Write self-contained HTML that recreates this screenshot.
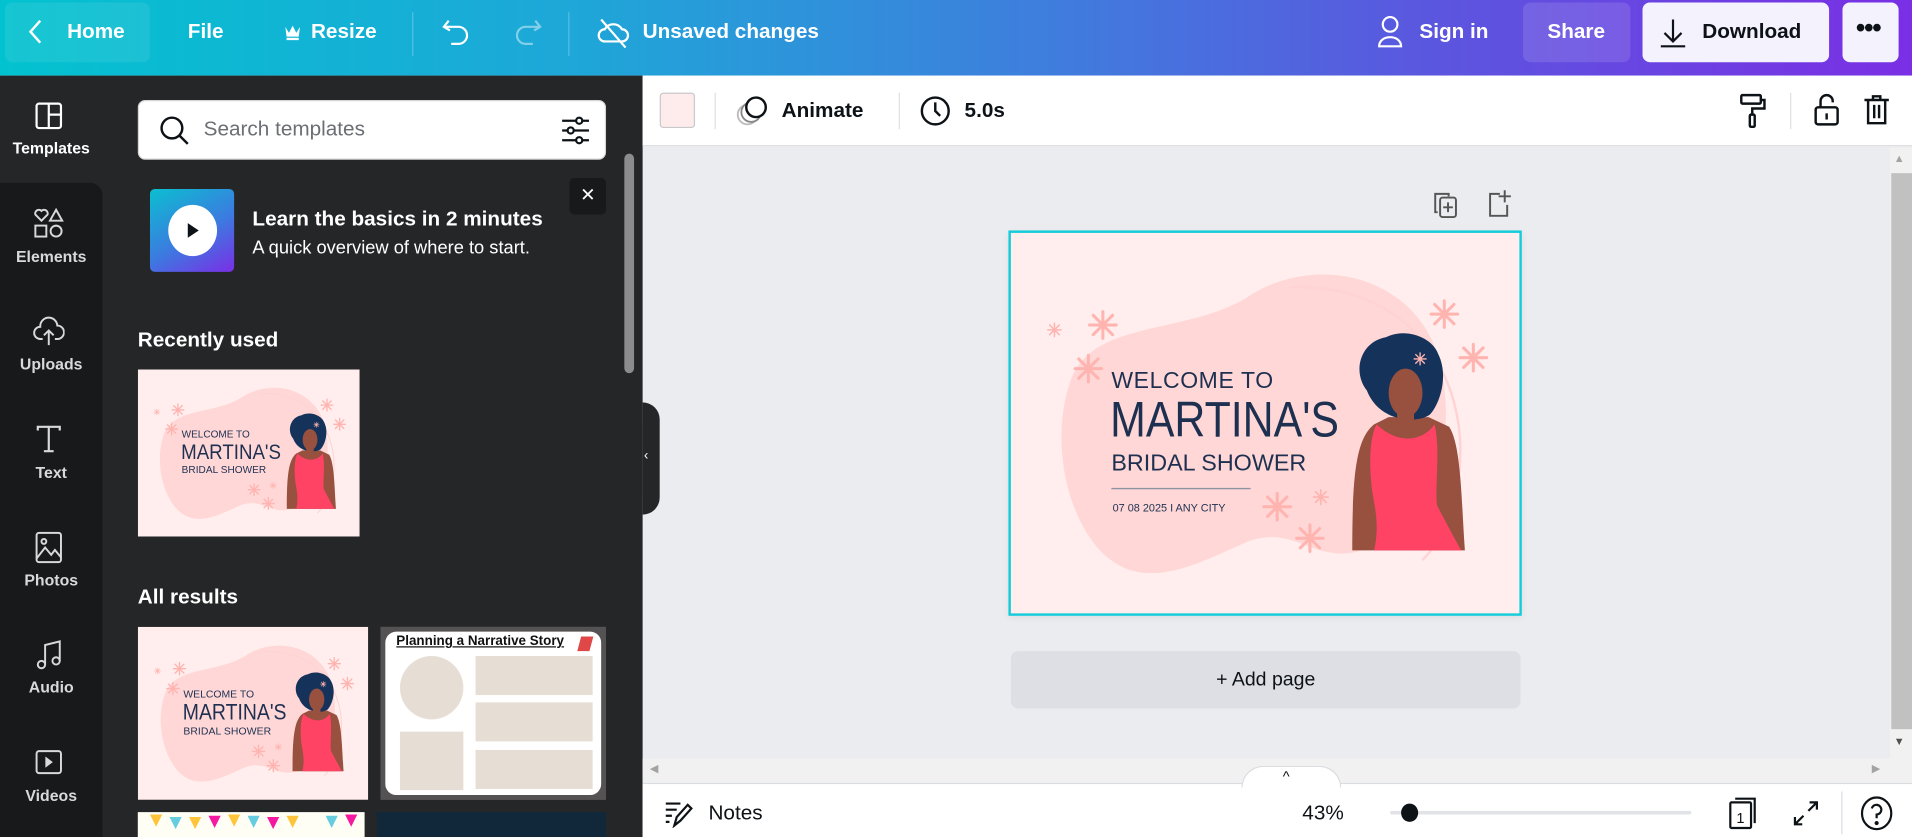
<!DOCTYPE html>
<html><head><meta charset="utf-8">
<style>
*{box-sizing:border-box;margin:0;padding:0}
html,body{width:1912px;height:837px;overflow:hidden;background:#ebecf0}
#w{position:absolute;left:0;top:0;width:1568px;height:686.5px;transform:scale(1.21939);transform-origin:0 0;font-family:"Liberation Sans",sans-serif;overflow:hidden;background:#ebecf0}
.a{position:absolute}
.tb{color:#fff;font-weight:bold;font-size:17px;top:16px}
.rail{color:#d9d9db;font-size:13px;font-weight:bold;width:84px;text-align:center;left:0}
.h{color:#fff;font-weight:bold;font-size:17px}
</style></head><body><div id="w">
<div class="a" style="left:0;top:0;width:1568px;height:62px;background:linear-gradient(90deg,#03c2cf 0%,#1ea7d8 30%,#3f7ddd 55%,#5b56df 75%,#7a2fe4 100%)"></div>
<div class="a" style="left:4px;top:2px;width:119px;height:49px;background:rgba(255,255,255,.08);border-radius:6px"></div>
<svg class="a" style="left:20px;top:14px" width="20" height="24" viewBox="0 0 20 24"><path d="M13 3 L5 12 L13 21" stroke="#fff" stroke-width="2" fill="none"/></svg>
<div class="a tb" style="left:55px">Home</div>
<div class="a tb" style="left:154px">File</div>
<svg class="a" style="left:233px;top:19px" width="14" height="14" viewBox="0 0 14 14"><path d="M1 3 L4 8 L7 2 L10 8 L13 3 L12 11 L2 11Z" fill="#fff"/><rect x="2" y="12" width="10" height="2" fill="#fff"/></svg>
<div class="a tb" style="left:255px">Resize</div>
<div class="a" style="left:338px;top:10px;width:1px;height:36px;background:rgba(255,255,255,.25)"></div>
<svg class="a" style="left:362px;top:13px" width="26" height="26" viewBox="0 0 26 26"><path d="M6 4 L2 9 L7 12" stroke="#fff" stroke-width="1.8" fill="none"/><path d="M3 9 H14 A7 7 0 0 1 14 23 H8" stroke="#fff" stroke-width="1.8" fill="none"/></svg>
<svg class="a" style="left:419px;top:13px" width="26" height="26" viewBox="0 0 26 26" opacity=".45"><path d="M20 4 L24 9 L19 12" stroke="#fff" stroke-width="1.8" fill="none"/><path d="M23 9 H12 A7 7 0 0 0 12 23 H18" stroke="#fff" stroke-width="1.8" fill="none"/></svg>
<div class="a" style="left:466px;top:10px;width:1px;height:36px;background:rgba(255,255,255,.25)"></div>
<svg class="a" style="left:488px;top:12px" width="30" height="30" viewBox="0 0 30 30"><path d="M8 22 H22 A5 5 0 0 0 22 12 A8 8 0 0 0 8 12 A5 5 0 0 0 8 22Z" stroke="#fff" stroke-width="1.8" fill="none"/><path d="M5 4 L25 27" stroke="#fff" stroke-width="1.8"/></svg>
<div class="a tb" style="left:527px">Unsaved changes</div>
<svg class="a" style="left:1128px;top:12px" width="24" height="28" viewBox="0 0 24 28"><circle cx="12" cy="8" r="6" stroke="#fff" stroke-width="1.8" fill="none"/><path d="M3 26 C3 16 21 16 21 26Z" stroke="#fff" stroke-width="1.8" fill="none"/></svg>
<div class="a tb" style="left:1164px">Sign in</div>
<div class="a" style="left:1249px;top:2px;width:88px;height:49px;background:rgba(255,255,255,.12);border-radius:6px"></div>
<div class="a tb" style="left:1269px">Share</div>
<div class="a" style="left:1347px;top:2px;width:153px;height:49px;background:#f4f2fd;border-radius:6px"></div>
<svg class="a" style="left:1360px;top:14px" width="24" height="26" viewBox="0 0 24 26"><path d="M12 2 V20 M5 13 L12 20 L19 13 M2 24 H22" stroke="#0d1216" stroke-width="1.8" fill="none"/></svg>
<div class="a" style="left:1396px;top:16px;font-size:17px;font-weight:bold;color:#0d1216">Download</div>
<div class="a" style="left:1511px;top:2px;width:46px;height:49px;background:#f4f2fd;border-radius:6px"></div>
<div class="a" style="left:1522px;top:10px;font-size:22px;font-weight:bold;color:#0d1216;letter-spacing:-1px">•••</div>

<div class="a" style="left:0;top:62px;width:527px;height:625px;background:#252627"></div>
<div class="a" style="left:0;top:150px;width:84px;height:537px;background:#18191b;border-top-right-radius:10px"></div>
<svg class="a" style="left:28px;top:83px" width="24" height="24" viewBox="0 0 24 24"><rect x="2" y="2" width="20" height="20" rx="2" stroke="#fff" stroke-width="1.8" fill="none"/><path d="M12 2 V22 M12 11 H22" stroke="#fff" stroke-width="1.8"/></svg>
<div class="a rail" style="top:114px;color:#fff">Templates</div>
<svg class="a" style="left:27px;top:170px" width="26" height="26" viewBox="0 0 26 26" stroke="#d9d9db" stroke-width="1.6" fill="none"><path d="M7 11 L2 6 A3 3 0 0 1 7 3 A3 3 0 0 1 12 6Z"/><path d="M19 2 L24 11 H14Z"/><rect x="2" y="15" width="9" height="9"/><circle cx="19" cy="19.5" r="4.5"/></svg>
<div class="a rail" style="top:203px">Elements</div>
<svg class="a" style="left:27px;top:258px" width="26" height="26" viewBox="0 0 26 26" stroke="#d9d9db" stroke-width="1.6" fill="none"><path d="M8 20 H6 A5 5 0 0 1 6 10 A7 7 0 0 1 20 9 A5 5 0 0 1 20 20 H18"/><path d="M13 25 V13 M9 17 L13 13 L17 17"/></svg>
<div class="a rail" style="top:291px">Uploads</div>
<svg class="a" style="left:28px;top:348px" width="24" height="24" viewBox="0 0 24 24" stroke="#d9d9db" stroke-width="1.8" fill="none"><path d="M3 5 V2 H21 V5 M12 2 V22 M8 22 H16"/></svg>
<div class="a rail" style="top:380px">Text</div>
<svg class="a" style="left:28px;top:436px" width="24" height="26" viewBox="0 0 24 26" stroke="#d9d9db" stroke-width="1.6" fill="none"><rect x="2" y="1" width="20" height="24" rx="2"/><circle cx="8" cy="8" r="2"/><path d="M2 22 L9 13 L14 19 L17 15 L22 21"/></svg>
<div class="a rail" style="top:468px">Photos</div>
<svg class="a" style="left:28px;top:524px" width="24" height="26" viewBox="0 0 24 26" stroke="#d9d9db" stroke-width="1.6" fill="none"><circle cx="6" cy="21" r="3"/><circle cx="18" cy="18" r="3"/><path d="M9 21 V5 L21 2 V18"/></svg>
<div class="a rail" style="top:556px">Audio</div>
<svg class="a" style="left:28px;top:613px" width="24" height="24" viewBox="0 0 24 24" stroke="#d9d9db" stroke-width="1.6" fill="none"><rect x="2" y="3" width="20" height="18" rx="2"/><path d="M10 9 L14 12 L10 15Z" fill="#d9d9db"/></svg>
<div class="a rail" style="top:645px">Videos</div>

<div class="a" style="left:113px;top:82px;width:384px;height:49px;background:#fff;border-radius:6px;border:1px solid #d6d6d6"></div>
<svg class="a" style="left:129px;top:93px" width="28" height="28" viewBox="0 0 28 28"><circle cx="12" cy="12" r="8.5" stroke="#0d1216" stroke-width="2" fill="none"/><path d="M18 18 L25 25" stroke="#0d1216" stroke-width="2"/></svg>
<div class="a" style="left:167px;top:96px;font-size:17px;color:#6b6e73">Search templates</div>
<svg class="a" style="left:459px;top:94px" width="26" height="26" viewBox="0 0 26 26" stroke="#0d1216" stroke-width="1.8" fill="none"><path d="M2 5 H24 M2 13 H24 M2 21 H24"/><circle cx="16" cy="5" r="2.5" fill="#fff"/><circle cx="9" cy="13" r="2.5" fill="#fff"/><circle cx="16" cy="21" r="2.5" fill="#fff"/></svg>
<div class="a" style="left:123px;top:155px;width:69px;height:68px;border-radius:4px;background:linear-gradient(150deg,#0bbfd0,#3b7be0 55%,#7a2ee6)"></div>
<div class="a" style="left:138px;top:168px;width:40px;height:42px;border-radius:50%;background:#fff"></div>
<svg class="a" style="left:151px;top:182px" width="14" height="14" viewBox="0 0 14 14"><path d="M3 1 L12 7 L3 13Z" fill="#0d1216"/></svg>
<div class="a h" style="left:207px;top:170px">Learn the basics in 2 minutes</div>
<div class="a" style="left:207px;top:195px;color:#fff;font-size:15px">A quick overview of where to start.</div>
<div class="a" style="left:467px;top:146px;width:30px;height:30px;background:#18191b;border-radius:4px;color:#fff;text-align:center;font-size:15px;line-height:30px">✕</div>
<div class="a" style="left:512px;top:126px;width:8px;height:180px;background:#8c8c8e;border-radius:4px"></div>
<div class="a h" style="left:113px;top:269px">Recently used</div>
<div class="a h" style="left:113px;top:480px">All results</div>

<svg width="0" height="0" style="position:absolute"><defs>
<g id="fl"><g stroke="#ffb4b0" stroke-width="2.5" stroke-linecap="round"><path d="M0 -11 V11 M-11 0 H11 M-8 -8 L8 8 M-8 8 L8 -8"/></g></g>
<symbol id="art" viewBox="0 0 420 314">
<rect width="420" height="314" fill="#ffeeed"/>
<path d="M50 120 C70 70 150 85 200 50 C260 15 340 40 355 110 C370 180 345 245 290 262 C250 274 235 240 195 255 C150 275 105 300 70 258 C40 220 35 160 50 120Z" fill="#ffd7d7"/>
<path d="M230 45 C330 40 380 120 370 200 C365 240 350 260 340 270" stroke="#ffd3d3" stroke-width="2" fill="none"/>
<use href="#fl" x="76" y="76"/><use href="#fl" x="64" y="112"/><use href="#fl" x="358" y="67"/><use href="#fl" x="382" y="103"/><use href="#fl" x="220" y="226"/><use href="#fl" x="247" y="252"/>
<g transform="translate(36 80) scale(.5)"><use href="#fl"/></g><g transform="translate(256 218) scale(.55)"><use href="#fl"/></g>
<path d="M282 262 C282 200 285 170 300 158 L312 152 L345 152 L362 160 C372 175 372 220 375 262Z" fill="#98503f"/>
<path d="M302 158 C320 175 340 172 350 158 C355 180 350 210 352 225 C360 240 368 255 372 262 L300 262 C305 240 300 225 298 210 C296 190 296 170 302 158Z" fill="#fe4365"/>
<path d="M294 130 C282 115 288 90 310 86 C326 78 348 86 353 100 C362 118 354 142 346 150 C335 158 304 156 294 130Z" fill="#15335a"/>
<ellipse cx="326" cy="132" rx="14" ry="20" fill="#98503f"/>
<rect x="319" y="145" width="14" height="14" fill="#98503f"/>
<g transform="translate(338 104) scale(.45)"><use href="#fl"/></g>
</symbol></defs></svg>

<svg class="a" style="left:113px;top:303px" width="182" height="137" viewBox="0 0 420 314" preserveAspectRatio="none"><use href="#art"/><g fill="#1e3050" font-family="Liberation Sans"><text x="83" y="128" font-size="19">WELCOME TO</text><text x="82" y="168" font-size="40" textLength="189" lengthAdjust="spacingAndGlyphs">MARTINA'S</text><text x="83" y="195" font-size="19" textLength="160">BRIDAL SHOWER</text></g></svg>
<svg class="a" style="left:113px;top:514px" width="189" height="142" viewBox="0 0 420 314" preserveAspectRatio="none"><use href="#art"/><g fill="#1e3050" font-family="Liberation Sans"><text x="83" y="128" font-size="19">WELCOME TO</text><text x="82" y="168" font-size="40" textLength="189" lengthAdjust="spacingAndGlyphs">MARTINA'S</text><text x="83" y="195" font-size="19" textLength="160">BRIDAL SHOWER</text></g></svg>
<div class="a" style="left:312px;top:514px;width:185px;height:142px;background:#555254;padding:4px 4px">
 <div style="position:relative;width:100%;height:100%;background:#fff;border-radius:9px;overflow:hidden">
  <div class="a" style="left:9px;top:2px;font-size:11px;font-weight:bold;text-decoration:underline;color:#111">Planning a Narrative Story</div>
  <div class="a" style="left:159px;top:4px;width:10px;height:12px;background:#e04848;transform:skewX(-15deg)"></div>
  <div class="a" style="left:12px;top:20px;width:52px;height:52px;border-radius:50%;background:#e6ddd5"></div>
  <div class="a" style="left:12px;top:82px;width:52px;height:48px;background:#e6ddd5"></div>
  <div class="a" style="left:74px;top:20px;width:96px;height:32px;background:#e6ddd5"></div>
  <div class="a" style="left:74px;top:58px;width:96px;height:32px;background:#e6ddd5"></div>
  <div class="a" style="left:74px;top:97px;width:96px;height:32px;background:#e6ddd5"></div>
 </div></div>
<div class="a" style="left:113px;top:666px;width:186px;height:22px;background:#fffef5"></div>
<svg class="a" style="left:113px;top:666px" width="186" height="20" viewBox="0 0 186 20"><path d="M10 2 L20 2 L15 12Z M42 4 L52 4 L47 14Z M74 2 L84 2 L79 12Z M122 3 L132 3 L127 13Z" fill="#ffc53a"/><path d="M26 4 L36 4 L31 14Z M90 3 L100 3 L95 13Z M154 3 L164 3 L159 13Z" fill="#66cde0"/><path d="M58 3 L68 3 L63 13Z M106 4 L116 4 L111 14Z M170 2 L180 2 L175 12Z" fill="#f419a0"/></svg>
<div class="a" style="left:309px;top:666px;width:188px;height:22px;background:#10283a"></div>

<div class="a" style="left:527px;top:62px;width:1041px;height:58px;background:#fff;border-bottom:1px solid #dcdde1"></div>
<div class="a" style="left:527px;top:330px;width:14px;height:92px;background:#252627;border-radius:0 14px 14px 0"></div>
<div class="a" style="left:528px;top:368px;color:#fff;font-size:11px">‹</div>

<div class="a" style="left:541px;top:76px;width:29px;height:29px;background:#fdeceb;border:1px solid #c9c9cc;border-radius:3px"></div>
<div class="a" style="left:586px;top:76px;width:1px;height:30px;background:#e0e0e3"></div>
<svg class="a" style="left:603px;top:77px" width="28" height="28" viewBox="0 0 28 28" fill="none"><circle cx="10" cy="17" r="8" stroke="#bbb" stroke-width="1.5"/><circle cx="13" cy="15" r="8" stroke="#888" stroke-width="1.5" fill="#fff"/><circle cx="17" cy="11" r="8" stroke="#0d1216" stroke-width="2" fill="#fff"/></svg>
<div class="a" style="left:641px;top:81px;font-size:17px;font-weight:bold;color:#0d1216">Animate</div>
<div class="a" style="left:737px;top:76px;width:1px;height:30px;background:#e0e0e3"></div>
<svg class="a" style="left:754px;top:78px" width="26" height="26" viewBox="0 0 26 26" fill="none" stroke="#0d1216" stroke-width="2"><circle cx="13" cy="13" r="11"/><path d="M13 6 V13 L17 17"/></svg>
<div class="a" style="left:791px;top:81px;font-size:17px;font-weight:bold;color:#0d1216">5.0s</div>
<svg class="a" style="left:1425px;top:76px" width="26" height="30" viewBox="0 0 26 30" fill="none" stroke="#0d1216" stroke-width="2"><rect x="3" y="2" width="16" height="7" rx="1"/><path d="M19 6 H22 V13 H12 V18"/><rect x="10" y="18" width="4" height="10" rx="1"/></svg>
<div class="a" style="left:1468px;top:76px;width:1px;height:30px;background:#e0e0e3"></div>
<svg class="a" style="left:1486px;top:75px" width="24" height="30" viewBox="0 0 24 30" fill="none" stroke="#0d1216" stroke-width="2"><path d="M7 13 V8 A5 5 0 0 1 17 8 V9"/><rect x="3" y="13" width="18" height="14" rx="2"/><path d="M12 18 V23"/></svg>
<svg class="a" style="left:1527px;top:76px" width="24" height="28" viewBox="0 0 24 28" fill="none" stroke="#0d1216" stroke-width="2"><path d="M2 6 H22 M9 6 V3 H15 V6 M5 6 V25 H19 V6 M10 10 V21 M14 10 V21"/></svg>

<div class="a" style="left:1550px;top:121px;width:18px;height:501px;background:#f1f1f1"></div>
<div class="a" style="left:1551px;top:142px;width:17px;height:456px;background:#c1c1c1"></div>
<div class="a" style="left:1553px;top:125px;font-size:9px;color:#a3a3a3">▲</div>
<div class="a" style="left:1553px;top:603px;font-size:9px;color:#505050">▼</div>
<div class="a" style="left:527px;top:622px;width:1041px;height:20px;background:#f1f1f1"></div>
<div class="a" style="left:533px;top:625px;font-size:9px;color:#a3a3a3">◀</div>
<div class="a" style="left:1535px;top:625px;font-size:9px;color:#a3a3a3">▶</div>

<svg class="a" style="left:1175px;top:156px" width="22" height="24" viewBox="0 0 22 24" fill="none" stroke="#555" stroke-width="1.6"><path d="M4 18 H2 V3 H13 V5"/><rect x="6" y="6" width="13" height="16" rx="2"/><path d="M12.5 10 V18 M8.5 14 H16.5"/></svg>
<svg class="a" style="left:1219px;top:155px" width="22" height="24" viewBox="0 0 22 24" fill="none" stroke="#555" stroke-width="1.6"><path d="M11 4 H3 V22 H17 V13 M15 1 V11 M10 6 H20"/></svg>

<div class="a" style="left:827px;top:189px;width:421px;height:316px;border:2px solid #12ccd9;box-shadow:0 2px 6px rgba(0,0,0,.06)"></div>
<svg class="a" style="left:829px;top:191px" width="417" height="312" viewBox="0 0 420 314" preserveAspectRatio="none"><use href="#art"/><g fill="#1e3050" font-family="Liberation Sans"><text x="83" y="128" font-size="19" letter-spacing=".5">WELCOME TO</text><text x="82" y="168" font-size="41" textLength="189" lengthAdjust="spacingAndGlyphs">MARTINA'S</text><text x="83" y="196" font-size="19" textLength="161" lengthAdjust="spacingAndGlyphs">BRIDAL SHOWER</text><text x="84" y="230" font-size="9">07 08  2025  I  ANY CITY</text></g><path d="M83 211 H198" stroke="#8e93a3" stroke-width="1.2"/></svg>

<div class="a" style="left:829px;top:534px;width:418px;height:47px;background:#dedfe4;border-radius:6px;text-align:center;line-height:47px;font-size:16px;color:#0d1216">+ Add page</div>

<div class="a" style="left:527px;top:642px;width:1041px;height:45px;background:#fff;border-top:1px solid #dcdde1"></div>
<div class="a" style="left:1018px;top:628px;width:82px;height:18px;background:#fff;border-radius:18px 18px 0 0;border:1px solid #dcdde1;border-bottom:none"></div>
<div class="a" style="left:1052px;top:630px;font-size:12px;color:#0d1216">^</div>
<svg class="a" style="left:545px;top:655px" width="24" height="24" viewBox="0 0 24 24" fill="none" stroke="#0d1216" stroke-width="1.8"><path d="M1 4 H13 M1 9 H10 M1 14 H6 M1 19 H4 M8 22 L10 15 L19 5 L22 8 L13 18Z"/></svg>
<div class="a" style="left:581px;top:657px;font-size:17px;color:#0d1216">Notes</div>
<div class="a" style="left:1068px;top:657px;font-size:17px;color:#0d1216">43%</div>
<div class="a" style="left:1140px;top:665px;width:247px;height:3px;background:#e2e3e7;border-radius:2px"></div>
<div class="a" style="left:1149px;top:659px;width:14px;height:15px;border-radius:50%;background:#0d1216"></div>
<svg class="a" style="left:1417px;top:653px" width="26" height="28" viewBox="0 0 26 28" fill="none" stroke="#0d1216" stroke-width="1.8"><rect x="2" y="5" width="17" height="21" rx="1"/><path d="M6 2 H22 V22"/><text x="7" y="22" font-size="12" fill="#0d1216" stroke="none" font-family="Liberation Sans">1</text></svg>
<svg class="a" style="left:1469px;top:655px" width="24" height="24" viewBox="0 0 24 24" fill="none" stroke="#0d1216" stroke-width="1.8"><path d="M14 10 L21 3 M15 3 H21 V9 M10 14 L3 21 M3 15 V21 H9"/></svg>
<div class="a" style="left:1510px;top:649px;width:1px;height:35px;background:#dcdde1"></div>
<svg class="a" style="left:1525px;top:652px" width="28" height="30" viewBox="0 0 28 30" fill="none" stroke="#0d1216" stroke-width="1.8"><ellipse cx="14" cy="15" rx="12" ry="13"/><path d="M10 11 A4 4 0 1 1 14 16 V19"/><circle cx="14" cy="23" r=".8" fill="#0d1216"/></svg>
</div></body></html>
